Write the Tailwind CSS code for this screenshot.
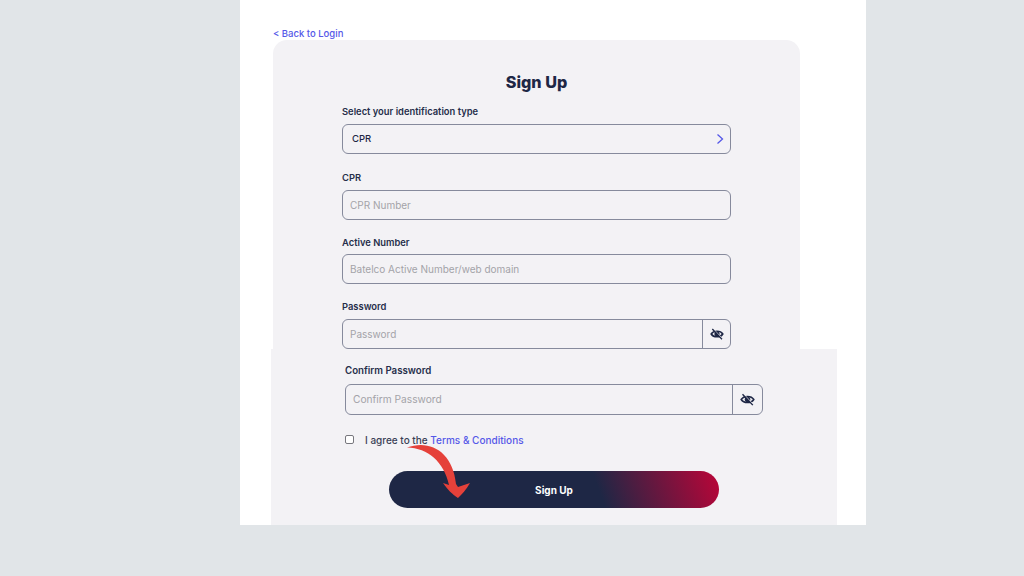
<!DOCTYPE html>
<html lang="en">
<head>
    <meta charset="UTF-8">
    <meta name="viewport" content="width=device-width, initial-scale=1.0">
    <title>Sign Up</title>
    <script src="https://cdn.jsdelivr.net/npm/@tailwindcss/browser@4"></script>
</head>
<body class="bg-[#e1e5e8] h-[576px] overflow-hidden font-['Inter','Liberation_Sans',sans-serif]">
    <div class="relative ml-[240px] w-[626px] h-[525px] bg-white pt-[26px]">
        <a class="block ml-[33px] h-[14px] pt-[1px] leading-[14px] text-[9.5px] font-medium text-[#5558e8]">&lt; Back to Login</a>

        <!-- upper card -->
        <div class="ml-[33px] w-[527px] h-[309px] bg-[#f3f2f5] rounded-t-[14px] px-[69px] pt-[31px]">
            <h1 class="h-[22px] leading-[22px] text-[16.2px] font-extrabold text-[#1e2745] text-center">Sign Up</h1>

            <label class="block mt-[13px] h-[12px] leading-[12px] text-[9.4px] font-semibold text-[#262e4a]">Select your identification type</label>
            <div class="mt-[6px] h-[30px] flex items-center justify-between border border-[#868a9c] rounded-[6px] pl-[9px] pr-[5px]">
                <span class="text-[9.5px] font-medium text-[#1e2745]">CPR</span>
                <svg class="w-[10px] h-[12px]" viewBox="0 0 10 12" fill="none" stroke="#5558e8" stroke-width="1.3"><path d="M2.5 1.5 L7.5 6 L2.5 10.5"/></svg>
            </div>

            <label class="block mt-[18px] h-[12px] leading-[12px] text-[9.4px] font-semibold text-[#262e4a]">CPR</label>
            <div class="mt-[6px] h-[30px] flex items-center border border-[#868a9c] rounded-[6px] pl-[7px]">
                <span class="text-[10px] text-[#a3a3a8]">CPR Number</span>
            </div>

            <label class="block mt-[17px] h-[12px] leading-[12px] text-[9.4px] font-semibold text-[#262e4a]">Active Number</label>
            <div class="mt-[5px] h-[30px] flex items-center border border-[#868a9c] rounded-[6px] pl-[7px]">
                <span class="text-[10px] text-[#a3a3a8]">Batelco Active Number/web domain</span>
            </div>

            <label class="block mt-[17px] h-[12px] leading-[12px] text-[9.4px] font-semibold text-[#262e4a]">Password</label>
            <div class="mt-[6px] h-[30px] flex border border-[#868a9c] rounded-[6px]">
                <div class="flex-1 flex items-center pl-[7px]">
                    <span class="text-[10px] text-[#a3a3a8]">Password</span>
                </div>
                <div class="w-[28px] border-l border-[#868a9c] flex items-center justify-center">
                    <svg class="w-[14px] h-[14px]" viewBox="0 0 24 24" fill="none" stroke="#1e2745" stroke-width="2.6"><path d="M2 12 C6 5.5 18 5.5 22 12 C18 18.5 6 18.5 2 12Z"/><circle cx="12" cy="12" r="3.2" fill="#1e2745"/><path d="M5.5 3 L22 20.5" stroke="#f3f2f5" stroke-width="1.6"/><path d="M4 3.5 L20.5 21" stroke-width="2.2"/></svg>
                </div>
            </div>
        </div>

        <!-- lower section -->
        <div class="ml-[31px] w-[566px] h-[176px] bg-[#f3f2f5] pt-[15px]">
            <label class="block ml-[74px] h-[13px] leading-[13px] text-[9.7px] font-semibold text-[#262e4a]">Confirm Password</label>
            <div class="ml-[74px] mt-[7px] w-[418px] h-[31px] flex border border-[#868a9c] rounded-[6px]">
                <div class="flex-1 flex items-center pl-[7px]">
                    <span class="text-[10.2px] text-[#a3a3a8]">Confirm Password</span>
                </div>
                <div class="w-[30px] border-l border-[#868a9c] flex items-center justify-center">
                    <svg class="w-[15px] h-[15px]" viewBox="0 0 24 24" fill="none" stroke="#1e2745" stroke-width="2.6"><path d="M2 12 C6 5.5 18 5.5 22 12 C18 18.5 6 18.5 2 12Z"/><circle cx="12" cy="12" r="3.2" fill="#1e2745"/><path d="M5.5 3 L22 20.5" stroke="#f3f2f5" stroke-width="1.6"/><path d="M4 3.5 L20.5 21" stroke-width="2.2"/></svg>
                </div>
            </div>
            <div class="ml-[74px] mt-[19px] h-[12px] flex items-center">
                <span class="w-[9px] h-[9px] -mt-[1px] bg-white border border-[#77777d] rounded-[2px]"></span>
                <span class="ml-[11px] mt-[1px] text-[10px] font-medium text-[#3a3f55]">I agree to the <span class="text-[#5558e8]">Terms &amp; Conditions</span></span>
            </div>
            <button class="block ml-[118px] mt-[25px] pt-[1px] w-[330px] h-[37px] rounded-full bg-[linear-gradient(70deg,#1e2745_0%,#1e2745_63%,#bb0538_100%)] text-white text-[10px] font-bold">Sign Up</button>
        </div>

        <!-- red arrow over the button -->
        <svg class="absolute left-[160px] top-[440px] w-[80px] h-[64px]" viewBox="0 0 80 64" fill="#e5413a">
            <path d="M7 7.5 C30 -1 53 12 56 44 L58 47 L70 43 C66 50 62 54 58 58 C52 54 48 50 43 43 L49 45 C44 22 28 8 7 7.5Z"/>
        </svg>
    </div>
</body>
</html>
